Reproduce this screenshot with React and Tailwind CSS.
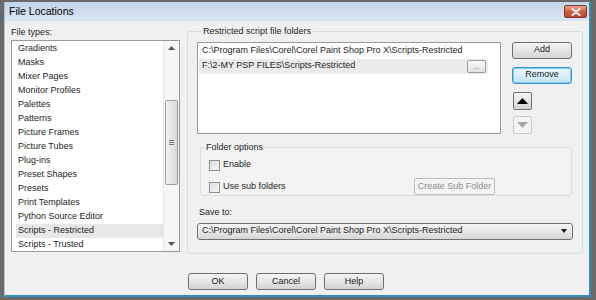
import { useState } from 'react';

const fileTypes = [
  'Gradients',
  'Masks',
  'Mixer Pages',
  'Monitor Profiles',
  'Palettes',
  'Patterns',
  'Picture Frames',
  'Picture Tubes',
  'Plug-ins',
  'Preset Shapes',
  'Presets',
  'Print Templates',
  'Python Source Editor',
  'Scripts - Restricted',
  'Scripts - Trusted',
];

const btn =
  'h-[17px] w-[60px] rounded-[3px] border border-[#707070] bg-linear-to-b from-[#f4f4f4] via-[#e6e6e6] to-[#d3d3d3] flex items-center justify-center text-[#1a1a1a]';

function Checkbox({ label }) {
  return (
    <label className="flex items-center gap-[3px] h-[12px]">
      <span className="w-[11px] h-[11px] border border-[#8f8f8f] bg-linear-to-br from-[#dcdcdc] to-[#f7f7f7]" />
      <span>{label}</span>
    </label>
  );
}

export default function App() {
  const [selected] = useState('Scripts - Restricted');

  return (
    <div
      className="w-[596px] h-[300px] bg-[#6a6a6a] pl-[4px] pt-[2px] pr-[5px] pb-[3px] text-[9px] text-[#1e1e1e]"
      style={{ fontFamily: '"Liberation Sans", Arial, sans-serif' }}
    >
      <div className="h-full flex flex-col border-l border-[#a9c3d8] border-r-2 border-b-2 border-r-[#2f8fb5] border-b-[#2f8fb5] bg-[#f0f0f0]">
        {/* title bar */}
        <div className="h-[19px] shrink-0 flex items-center justify-between pl-[4px] pr-[2px] bg-linear-to-b from-[#c2d5ea] to-[#dbe6f2]">
          <span className="text-[10.5px] text-black">File Locations</span>
          <div className="w-[23px] h-[13px] rounded-[2px] border border-[#7a3a2e] bg-linear-to-b from-[#e8a593] via-[#d25a3f] to-[#c3432a] flex items-center justify-center">
            <svg width="10" height="8" viewBox="0 0 10 8">
              <path d="M1.5 1 L8.5 7 M8.5 1 L1.5 7" stroke="#fff" strokeWidth="2" strokeLinecap="round" />
            </svg>
          </div>
        </div>

        {/* body */}
        <div className="flex-1 flex flex-col pl-[6px] pt-[4px]">
          <div className="flex gap-[7px]">
            {/* left column */}
            <div className="flex flex-col">
              <div className="h-[15px] flex items-center">File types:</div>
              <div className="w-[169px] h-[212px] border border-[#9a9a9a] bg-white flex">
                <div className="flex-1 pl-[4px] pt-[1px]">
                  {fileTypes.map((t) => (
                    <div
                      key={t}
                      className={`h-[14px] flex items-center pl-[2px] ${
                        t === selected ? 'bg-[#e7e7e7]' : ''
                      }`}
                    >
                      {t}
                    </div>
                  ))}
                </div>
                <div className="w-[16px] border-l border-[#e4e4e4] bg-[#f6f6f6] flex flex-col items-center">
                  <div className="h-[14px] flex items-center">
                    <svg width="7" height="4" viewBox="0 0 7 4">
                      <path d="M0 4 L3.5 0 L7 4 Z" fill="#555" />
                    </svg>
                  </div>
                  <div className="mt-[45px] w-[13px] h-[85px] rounded-[2px] border border-[#9b9b9b] bg-linear-to-r from-[#f3f3f3] to-[#d9d9d9] flex flex-col items-center justify-center gap-[1px]">
                    <span className="w-[5px] h-px bg-[#777]" />
                    <span className="w-[5px] h-px bg-[#777]" />
                    <span className="w-[5px] h-px bg-[#777]" />
                  </div>
                  <div className="flex-1" />
                  <div className="h-[14px] flex items-center">
                    <svg width="7" height="4" viewBox="0 0 7 4">
                      <path d="M0 0 L3.5 4 L7 0 Z" fill="#555" />
                    </svg>
                  </div>
                </div>
              </div>
            </div>

            {/* right group */}
            <fieldset className="w-[396px] h-[229px] border border-[#d3dce3] rounded-[3px] px-[9px] pb-0 mt-0">
              <legend className="px-[2px] ml-[4px] text-[#1e1e1e]">Restricted script file folders</legend>
              <div className="flex gap-[11px] mt-[3px]">
                <div className="w-[304px] h-[92px] border border-[#9a9a9a] bg-white pt-[1px] pl-[1px] pr-[12px]">
                  <div className="h-[15px] flex items-center pl-[3px]">
                    C:\Program Files\Corel\Corel Paint Shop Pro X\Scripts-Restricted
                  </div>
                  <div className="h-[15px] flex items-center justify-between pl-[3px] pr-[2px] bg-[#ebebeb]">
                    <span>F:\2-MY PSP FILES\Scripts-Restricted</span>
                    <span className="w-[19px] h-[13px] rounded-[2px] border border-[#9c9c9c] bg-linear-to-b from-[#fafafa] to-[#e2e2e2] flex items-end justify-center pb-[2px] text-[7px] leading-none text-[#666]">
                      ...
                    </span>
                  </div>
                </div>
                <div className="flex flex-col gap-[8px]">
                  <div className={btn}>Add</div>
                  <div className="h-[17px] w-[60px] rounded-[3px] border border-[#3c8fd0] bg-linear-to-b from-[#eaf6fd] via-[#d9f0fc] to-[#bde5fb] flex items-center justify-center text-[#1a1a1a] shadow-[inset_0_0_0_1px_#7ad0f5]">
                    Remove
                  </div>
                  <div className="w-[19px] h-[18px] ml-[1px] rounded-[2px] border border-[#707070] bg-linear-to-b from-[#f4f4f4] to-[#d6d6d6] flex items-center justify-center">
                    <svg width="11" height="6" viewBox="0 0 11 6">
                      <path d="M0 6 L5.5 0 L11 6 Z" fill="#000" />
                    </svg>
                  </div>
                  <div className="w-[19px] h-[18px] ml-[1px] -mt-[2px] rounded-[2px] border border-[#c8c8c8] bg-[#f4f4f4] flex items-center justify-center">
                    <svg width="11" height="6" viewBox="0 0 11 6">
                      <path d="M0 0 L5.5 6 L11 0 Z" fill="#a6a6a6" />
                    </svg>
                  </div>
                </div>
              </div>

              <fieldset className="mt-[7px] ml-[3px] w-[372px] h-[55px] border border-[#dcdcdc] rounded-[3px] bg-[#f2f2f2] pl-[8px] pr-[76px]">
                <legend className="px-[2px] -ml-[5px]">Folder options</legend>
                <div className="flex flex-col gap-[8px] mt-[5px]">
                  <Checkbox label="Enable" />
                  <div className="flex items-center justify-between">
                    <Checkbox label="Use sub folders" />
                    <div className="h-[17px] w-[81px] rounded-[2px] border border-[#bcbcbc] bg-[#f4f4f4] flex items-center justify-center text-[#8d8d8d] -mt-[1px]">
                      Create Sub Folder
                    </div>
                  </div>
                </div>
              </fieldset>

              <div className="h-[14px] mt-[10px] flex items-center pl-[2px]">Save to:</div>
              <div className="mt-[3px] w-[376px] h-[17px] rounded-[3px] border border-[#707070] bg-linear-to-b from-[#f4f4f4] via-[#e8e8e8] to-[#d7d7d7] flex items-center justify-between pl-[4px] pr-[5px]">
                <span>C:\Program Files\Corel\Corel Paint Shop Pro X\Scripts-Restricted</span>
                <svg width="6" height="4" viewBox="0 0 6 4">
                  <path d="M0 0 L3 4 L6 0 Z" fill="#111" />
                </svg>
              </div>
            </fieldset>
          </div>

          {/* bottom buttons */}
          <div className="flex gap-[8px] ml-[177px] mt-[19px]">
            <div className={btn}>OK</div>
            <div className={btn}>Cancel</div>
            <div className={btn}>Help</div>
          </div>
        </div>
      </div>
    </div>
  );
}
